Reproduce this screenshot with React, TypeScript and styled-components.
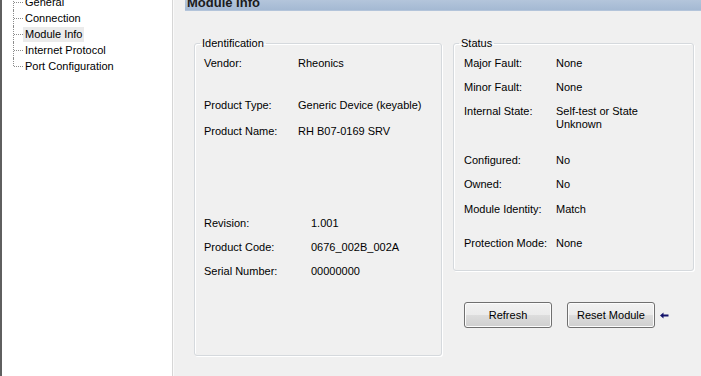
import React from 'react';
import styled, { createGlobalStyle } from 'styled-components';

const GlobalStyle = createGlobalStyle`
  * { box-sizing: border-box; }
  body {
    margin: 0;
    overflow: hidden;
    background: #f0f0f0;
    font-family: 'Liberation Sans', Arial, sans-serif;
    font-size: 11px;
    color: #000;
  }
`;

const treeItems = ['General', 'Connection', 'Module Info', 'Internet Protocol', 'Port Configuration'];

const identification = [
  { label: 'Vendor:', value: 'Rheonics', mt: 6, col: 94 },
  { label: 'Product Type:', value: 'Generic Device (keyable)', mt: 28, col: 94 },
  { label: 'Product Name:', value: 'RH B07-0169 SRV', mt: 12, col: 94 },
  { label: 'Revision:', value: '1.001', mt: 78, col: 107 },
  { label: 'Product Code:', value: '0676_002B_002A', mt: 10, col: 107 },
  { label: 'Serial Number:', value: '00000000', mt: 10, col: 107 },
];

const status = [
  { label: 'Major Fault:', value: 'None', mt: 6 },
  { label: 'Minor Fault:', value: 'None', mt: 10 },
  { label: 'Internal State:', value: 'Self-test or State Unknown', mt: 10 },
  { label: 'Configured:', value: 'No', mt: 22 },
  { label: 'Owned:', value: 'No', mt: 10 },
  { label: 'Module Identity:', value: 'Match', mt: 11 },
  { label: 'Protection Mode:', value: 'None', mt: 20 },
];

export default function App() {
  return (
    <Window>
      <GlobalStyle />
      <TreePanel>
        <TreeList>
          {treeItems.map((item, i) => (
            <TreeItem key={item} $last={i === treeItems.length - 1}>
              <TreeLabel $selected={item === 'Module Info'}>{item}</TreeLabel>
            </TreeItem>
          ))}
        </TreeList>
      </TreePanel>

      <Main>
        <Header>Module Info</Header>
        <Content>
          <GroupBox $padLeft={9} $padBottom={77}>
            <Legend $shift={-4}>Identification</Legend>
            {identification.map((r) => (
              <Row key={r.label} $mt={r.mt} $col={r.col}>
                <span>{r.label}</span>
                <Value>{r.value}</Value>
              </Row>
            ))}
          </GroupBox>

          <RightColumn>
            <GroupBox $padLeft={10} $padBottom={20}>
              <Legend $shift={-5}>Status</Legend>
              {status.map((r) => (
                <Row key={r.label} $mt={r.mt} $col={92}>
                  <span>{r.label}</span>
                  <Value $maxWidth={110}>{r.value}</Value>
                </Row>
              ))}
            </GroupBox>

            <ButtonBar>
              <Button>Refresh</Button>
              <Button>Reset Module</Button>
              <BackArrow />
            </ButtonBar>
          </RightColumn>
        </Content>
      </Main>
    </Window>
  );
}

function BackArrow() {
  return (
    <ArrowSvg width="9" height="7" viewBox="0 0 9 7">
      <path d="M0 3.5 L3.5 0.5 L3.5 2.6 L8.5 2.6 L8.5 4.4 L3.5 4.4 L3.5 6.5 Z" fill="#12126b" />
    </ArrowSvg>
  );
}

const Window = styled.div`
  display: flex;
  height: 376px;
  width: 701px;
  overflow: hidden;
`;

const TreePanel = styled.div`
  width: 173px;
  flex-shrink: 0;
  background: #ffffff;
  border-left: 2px solid #5f5f5f;
  border-right: 1px solid #d6d6d6;
  overflow: hidden;
`;

const TreeList = styled.ul`
  list-style: none;
  margin: -6px 0 0;
  padding: 0;
`;

const TreeItem = styled.li<{ $last: boolean }>`
  position: relative;
  height: 16px;
  line-height: 16px;
  padding-left: 21px;
  white-space: nowrap;

  &::before {
    content: '';
    position: absolute;
    left: 11px;
    top: 0;
    height: ${(p) => (p.$last ? '8px' : '16px')};
    border-left: 1px dotted #8c8c8c;
  }

  &::after {
    content: '';
    position: absolute;
    left: 12px;
    top: 8px;
    width: 9px;
    border-top: 1px dotted #8c8c8c;
  }
`;

const TreeLabel = styled.span<{ $selected: boolean }>`
  display: inline-block;
  padding: 0 2px;
  height: 15px;
  line-height: 15px;
  color: #000;
  background: ${(p) => (p.$selected ? '#ebebeb' : 'transparent')};
`;

const Main = styled.div`
  flex: 1;
  background: #f0f0f0;
  border-left: 1px solid #fafafa;
  padding: 0 7px 0 11px;
`;

const Header = styled.div`
  margin: -9px -7px 0 0;
  height: 20px;
  padding: 4px 0 0 2px;
  line-height: 15px;
  font-size: 13px;
  font-weight: bold;
  color: #1b1b1b;
  background: linear-gradient(#c2d0e2, #a4b9d3);
  border-bottom: 1px solid #b3c4da;
`;

const Content = styled.div`
  display: grid;
  grid-template-columns: 248px 241px;
  column-gap: 11px;
  align-items: start;
  margin-top: 25px;
  padding-left: 9px;
`;

const RightColumn = styled.div`
  display: flex;
  flex-direction: column;
`;

const GroupBox = styled.fieldset<{ $padLeft: number; $padBottom: number }>`
  margin: 0;
  min-width: 0;
  padding: 0 4px ${(p) => p.$padBottom}px ${(p) => p.$padLeft}px;
  border: 1px solid #d5d9dd;
  border-radius: 3px;
  box-shadow: 1px 1px 0 #ffffff, inset 1px 1px 0 #ffffff;
`;

const Legend = styled.legend<{ $shift: number }>`
  margin-left: ${(p) => p.$shift}px;
  padding: 0 2px;
  line-height: 14px;
  font-size: 11px;
  color: #000;
`;

const Row = styled.div<{ $mt: number; $col: number }>`
  display: grid;
  grid-template-columns: ${(p) => p.$col}px auto;
  margin-top: ${(p) => p.$mt}px;
  line-height: 14px;
  white-space: nowrap;
`;

const Value = styled.span<{ $maxWidth?: number }>`
  white-space: normal;
  max-width: ${(p) => (p.$maxWidth ? `${p.$maxWidth}px` : 'none')};
  line-height: 13px;
  padding-top: 1px;
`;

const ButtonBar = styled.div`
  display: flex;
  align-items: center;
  gap: 15px;
  margin-top: 31px;
  padding-left: 11px;
`;

const Button = styled.button`
  width: 88px;
  height: 26px;
  padding: 0;
  font-family: 'Liberation Sans', Arial, sans-serif;
  font-size: 11px;
  color: #000;
  border: 1px solid #707070;
  border-radius: 3px;
  background: linear-gradient(#f2f2f2 0%, #ebebeb 50%, #dddddd 51%, #cfcfcf 100%);
  box-shadow: inset 0 0 0 1px #fcfcfc;
`;

const ArrowSvg = styled.svg`
  margin-left: -10px;
  display: block;
`;
